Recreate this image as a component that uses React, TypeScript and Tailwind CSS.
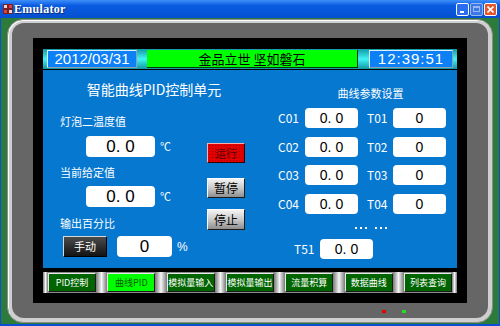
import React from "react";

const cjk = "font-['Noto_Sans_CJK_SC','Noto_Sans',sans-serif]";
const latin = "font-['Liberation_Sans','Noto_Sans',sans-serif]";
const cyan = "bg-linear-to-b from-[#0f9aa6] via-[#40f4f6] to-[#0f98a4]";
const spacer = "bg-linear-to-r from-[#7a7a7a] via-[#f6f6f6] to-[#7a7a7a]";

const ValueBox = ({ w, h, size, children }: any) => (
  <div
    className={`${w} ${h} ${size} bg-white rounded-[4px] flex items-center justify-center text-black ${latin}`}
  >
    {children}
  </div>
);

const Row = ({ c, t }: any) => (
  <div className="flex items-center h-[20px]">
    <div className="w-[27px] text-[12px] text-white">{c}</div>
    <ValueBox w="w-[53px]" h="h-[20px]" size="text-[14px]">
      0. 0
    </ValueBox>
    <div className="w-[26px] ml-[9px] text-[12px] text-white">{t}</div>
    <ValueBox w="w-[53px]" h="h-[20px]" size="text-[14px]">
      0
    </ValueBox>
  </div>
);

const NavBtn = ({ label, active }: any) => (
  <div
    className={`w-[48px] my-[1px] flex items-center justify-center whitespace-nowrap text-[9px] border border-t-[#e8e8e8] border-l-[#e8e8e8] border-r-[#1a1a1a] border-b-[#1a1a1a] ${
      active ? "bg-[#00ff00] text-[#006000]" : "bg-[#006400] text-white"
    }`}
  >
    {label}
  </div>
);

const Dots = () => (
  <div className="flex gap-[3px]">
    <div className="w-[2px] h-[2px] bg-white" />
    <div className="w-[2px] h-[2px] bg-white" />
    <div className="w-[2px] h-[2px] bg-white" />
  </div>
);

export default function App() {
  const nav = ["PID控制", "曲线PID", "模拟量输入", "模拟量输出", "流量积算", "数据曲线", "列表查询"];
  return (
    <div className={`w-[500px] h-[326px] flex flex-col bg-[#0b4fd6] overflow-hidden ${cjk}`}>
      {/* title bar */}
      <div className="h-[18px] flex items-center bg-linear-to-b from-[#3d8ff8] via-[#0a5ce2] via-30% to-[#0650d0]">
        <svg width="10" height="10" viewBox="0 0 10 10" className="ml-[3px]">
          <rect x="0" y="0" width="10" height="10" fill="#7a2020" />
          <rect x="1" y="1" width="3" height="3" fill="#f0d0d0" />
          <rect x="6" y="1" width="3" height="3" fill="#e04040" />
          <rect x="1" y="6" width="3" height="3" fill="#e04040" />
          <rect x="6" y="6" width="3" height="3" fill="#f0d0d0" />
        </svg>
        <span className="ml-[1px] text-white text-[12px] font-bold font-['Liberation_Serif',serif] tracking-[0.3px] [text-shadow:1px_1px_0_#0a2a80]">
          Emulator
        </span>
        <div className="ml-auto mr-[3px] flex gap-[1px]">
          <div className="w-[13px] h-[13px] rounded-[2px] border border-white bg-[#2a6cf2] flex items-end pl-[3px] pb-[2px]">
            <div className="w-[4px] h-[2px] bg-white" />
          </div>
          <div className="w-[13px] h-[13px] rounded-[2px] border border-[#9ab8f0] bg-[#3b78e6] flex items-center justify-center">
            <div className="w-[7px] h-[6px] border border-[#9ab8f0] border-t-2" />
          </div>
          <div className="w-[13px] h-[13px] rounded-[2px] border border-white bg-[#e0582c] flex items-center justify-center">
            <svg width="7" height="7" viewBox="0 0 7 7">
              <path d="M0.5 0.5 L6.5 6.5 M6.5 0.5 L0.5 6.5" stroke="white" strokeWidth="1.6" />
            </svg>
          </div>
        </div>
      </div>

      {/* window body */}
      <div className="flex-1 flex bg-[#2d7b3b] mx-[1px] mb-[2px] pt-[1px] pb-[1px] pl-[6px] pr-[6px]">
        <div className="flex-1 rounded-[16px] border border-[#8c8c8c] bg-[#cfcfcf] pt-[3px] px-[4px] pb-[4px] shadow-[inset_1px_1px_0_#ffffff]">
          <div className="h-full rounded-[12px] bg-[#666666] pt-[15px] px-[21px] flex flex-col">
            {/* screen */}
            <div className="h-[265px] bg-black pt-[11px] px-[10px] flex flex-col">
              {/* top bar */}
              <div className={`h-[20px] flex ${cyan}`}>
                <div className="w-[4px]" />
                <div className={`w-[90px] my-[1px] bg-[#0c80f4] border border-[#e0ecf8] border-r-[#8aa0b8] border-b-[#8aa0b8] flex items-center justify-center text-white text-[15px] ${latin}`}>
                  2012/03/31
                </div>
                <div className="w-[10px]" />
                <div className="w-[211px] my-[1px] bg-[#00ff00] border-r border-b border-[#003a00] flex items-center justify-center text-black text-[13px]">
                  金品立世 坚如磐石
                </div>
                <div className="w-[11px]" />
                <div className={`w-[84px] my-[1px] bg-[#0c80f4] border border-[#e0ecf8] border-r-[#8aa0b8] border-b-[#8aa0b8] flex items-center justify-center text-white text-[15px] tracking-[1px] ${latin}`}>
                  12:39:51
                </div>
                <div className="w-[4px]" />
              </div>

              {/* main panel */}
              <div className="h-[198px] mt-[1px] bg-[#0778d0] flex text-white">
                <div className="w-[235px] flex flex-col">
                  <div className="w-[222px] pt-[11px] text-center text-[14px] leading-[17px]">
                    智能曲线PID控制单元
                  </div>
                  <div className="flex">
                    <div className="w-[164px] pl-[17px] flex flex-col">
                      <div className="mt-[17px] text-[11px] leading-[13px]">灯泡二温度值</div>
                      <div className="mt-[8px] ml-[26px] flex items-center">
                        <ValueBox w="w-[69px]" h="h-[21px]" size="text-[17px]">
                          0. 0
                        </ValueBox>
                        <span className="ml-[5px] text-[11px]">℃</span>
                      </div>
                      <div className="mt-[9px] text-[11px] leading-[13px]">当前给定值</div>
                      <div className="mt-[7px] ml-[26px] flex items-center">
                        <ValueBox w="w-[69px]" h="h-[21px]" size="text-[17px]">
                          0. 0
                        </ValueBox>
                        <span className="ml-[5px] text-[11px]">℃</span>
                      </div>
                      <div className="mt-[10px] text-[11px] leading-[13px]">输出百分比</div>
                      <div className="mt-[6px] ml-[3px] flex items-center">
                        <div className="w-[44px] h-[21px] bg-linear-to-b from-[#4c4c4c] to-[#141414] border border-t-[#d8d8d8] border-l-[#d8d8d8] border-r-[#000] border-b-[#000] flex items-center justify-center text-[11px] text-white">
                          手动
                        </div>
                        <div className="ml-[10px]">
                          <ValueBox w="w-[55px]" h="h-[21px]" size="text-[17px]">
                            0
                          </ValueBox>
                        </div>
                        <span className={`ml-[5px] text-[12px] ${latin}`}>%</span>
                      </div>
                    </div>
                    <div className="w-[38px] flex flex-col">
                      <div className="mt-[45px] h-[20px] bg-[#e40000] bg-[radial-gradient(#a00000_0.7px,transparent_1px)] bg-size-[3px_3px] border border-t-[#f6b0b0] border-l-[#f6b0b0] border-r-[#300000] border-b-[#300000] flex items-center justify-center text-[11px] text-[#5a0000]">
                        运行
                      </div>
                      <div className="mt-[15px] h-[20px] bg-linear-to-b from-[#f4f4f4] via-[#cacaca] to-[#8e8e8e] border border-t-[#ffffff] border-l-[#ffffff] border-r-[#1a1a1a] border-b-[#1a1a1a] flex items-center justify-center text-[12px] text-black">
                        暂停
                      </div>
                      <div className="mt-[11px] h-[21px] bg-linear-to-b from-[#f4f4f4] via-[#cacaca] to-[#8e8e8e] border border-t-[#ffffff] border-l-[#ffffff] border-r-[#1a1a1a] border-b-[#1a1a1a] flex items-center justify-center text-[12px] text-black">
                        停止
                      </div>
                    </div>
                  </div>
                </div>

                <div className="flex-1 flex flex-col">
                  <div className="pt-[17px] pl-[6px] text-center text-[11px] leading-[13px]">曲线参数设置</div>
                  <div className="mt-[8px]">
                    <Row c="C01" t="T01" />
                  </div>
                  <div className="mt-[9px]">
                    <Row c="C02" t="T02" />
                  </div>
                  <div className="mt-[8px]">
                    <Row c="C03" t="T03" />
                  </div>
                  <div className="mt-[9px]">
                    <Row c="C04" t="T04" />
                  </div>
                  <div className="mt-[8px] h-[12px] pl-[77px] flex items-center gap-[8px]">
                    <Dots />
                    <Dots />
                  </div>
                  <div className="mt-[5px] pl-[16px] flex items-center h-[20px]">
                    <div className="w-[26px] text-[12px]">T51</div>
                    <ValueBox w="w-[53px]" h="h-[20px]" size="text-[14px]">
                      0. 0
                    </ValueBox>
                  </div>
                </div>
              </div>

              {/* nav strip */}
              <div className="mt-[4px] h-[21px] flex bg-[#8a8a8a]">
                <div className={`w-[5px] ${spacer}`} />
                {nav.map((n, i) => (
                  <React.Fragment key={n}>
                    {i > 0 && <div className={`flex-1 ${spacer}`} />}
                    <NavBtn label={n} active={i === 1} />
                  </React.Fragment>
                ))}
                <div className={`w-[5px] ${spacer}`} />
              </div>
            </div>

            {/* leds */}
            <div className="flex justify-end gap-[16px] pr-[61px] pt-[7px]">
              <div className="w-[4px] h-[3px] bg-[#e00000]" />
              <div className="w-[4px] h-[3px] bg-[#20e020]" />
            </div>
          </div>
        </div>
      </div>
    </div>
  );
}
